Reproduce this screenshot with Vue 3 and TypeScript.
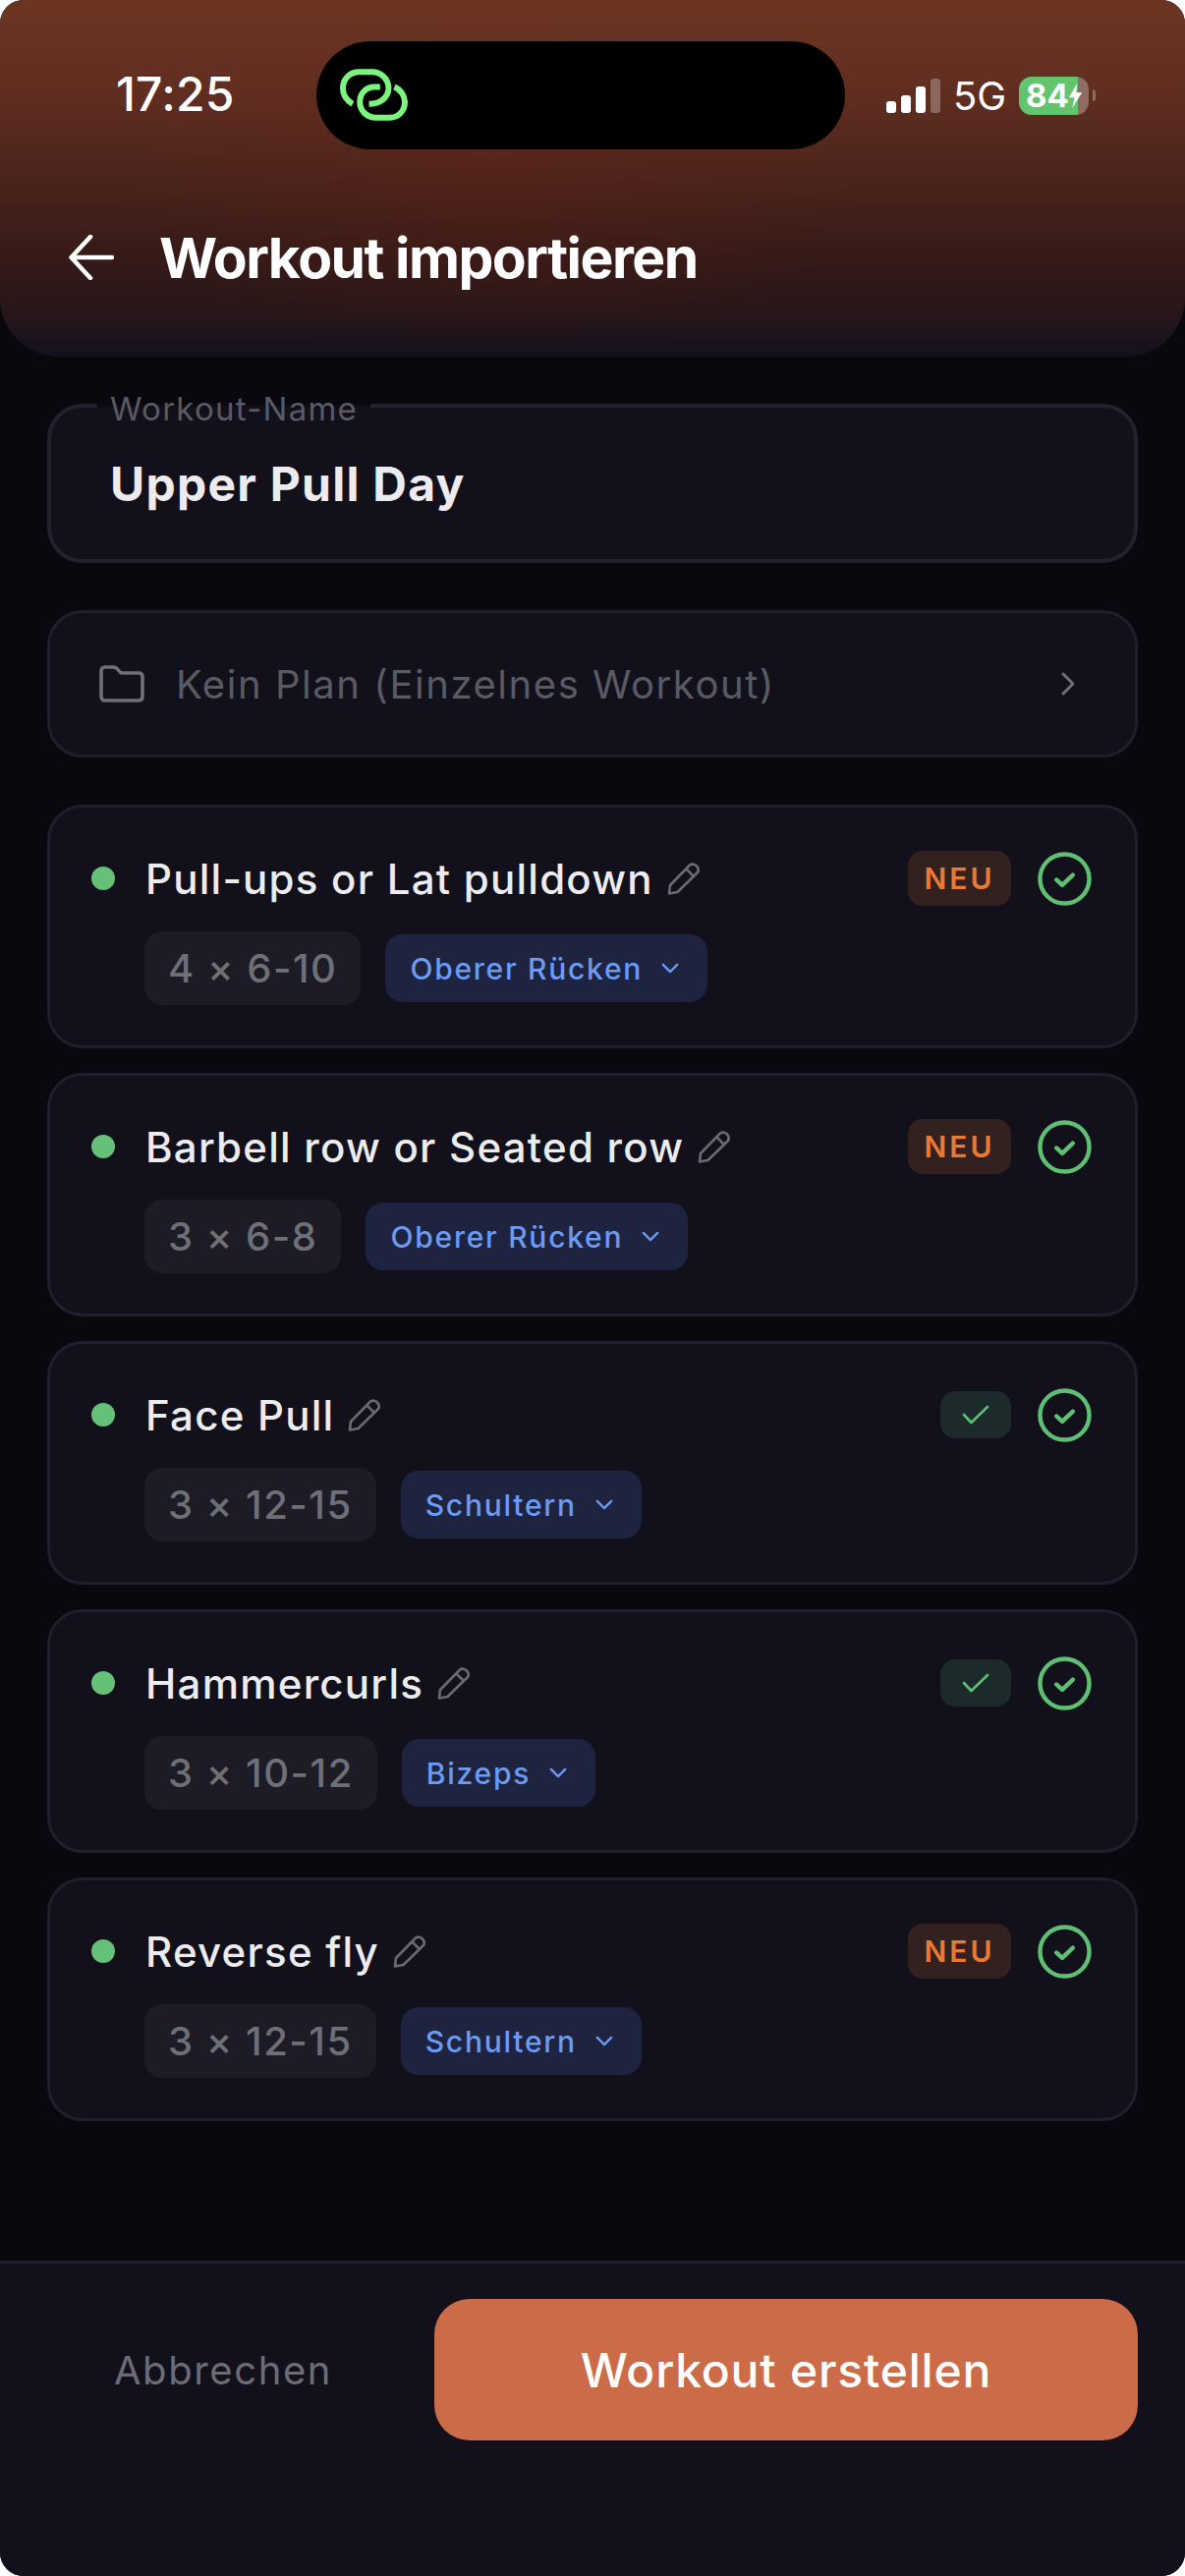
<script setup lang="ts">
interface Exercise {
  name: string
  sets: string
  muscle: string
  isNew: boolean
}
const exercises: Exercise[] = [
  { name: 'Pull-ups or Lat pulldown', sets: '4 × 6-10', muscle: 'Oberer Rücken', isNew: true },
  { name: 'Barbell row or Seated row', sets: '3 × 6-8', muscle: 'Oberer Rücken', isNew: true },
  { name: 'Face Pull', sets: '3 × 12-15', muscle: 'Schultern', isNew: false },
  { name: 'Hammercurls', sets: '3 × 10-12', muscle: 'Bizeps', isNew: false },
  { name: 'Reverse fly', sets: '3 × 12-15', muscle: 'Schultern', isNew: true },
]
</script>

<template>
  <div class="screen">
    <header class="header">
      <div class="status">
        <span class="time">17:25</span>
        <div class="island">
          <svg class="logo" viewBox="130 140 220 170" fill="none" stroke="#7cf57f" stroke-width="18" stroke-linecap="butt">
            <path d="M178 256 C158 245 148 228 148 208 C148 178 170 158 198 158 H238 C266 158 288 180 288 208 C288 236 262 256 228 256" />
            <path d="M262 204 H245 C218 204 200 225 200 250 C200 278 222 298 250 298 H292 C318 298 338 278 338 250 C338 232 326 212 306 204" />
          </svg>
        </div>
        <div class="signal">
          <i class="bar b1"></i><i class="bar b2"></i><i class="bar b3"></i><i class="bar b4"></i>
        </div>
        <span class="net">5G</span>
        <div class="battery">
          <span class="level">84</span>
          <svg class="bolt" viewBox="0 0 18 30"><path d="M11 0 L1 17 H8 L5 30 L17 11 H10 Z" fill="#fff" /></svg>
        </div>
        <i class="tip"></i>
      </div>
      <div class="nav">
        <svg class="back" viewBox="0 0 46 46" fill="none" stroke="#fff" stroke-width="4.5" stroke-linecap="round" stroke-linejoin="round">
          <path d="M44 23 H3 M22 2 L2.5 23 L22 44" />
        </svg>
        <h1 class="title">Workout importieren</h1>
      </div>
    </header>

    <main class="main">
      <div class="field">
        <span class="field-label">Workout-Name</span>
        <span class="field-value">Upper Pull Day</span>
      </div>

      <div class="plan">
        <svg class="folder" viewBox="0 0 46 38" fill="none" stroke="#6f6f78" stroke-width="3.6" stroke-linejoin="round">
          <path d="M2 6 Q2 2 6 2 H14 Q17 2 19 4.5 L21 7 Q22 8 24 8 H40 Q44 8 44 12 V32 Q44 36 40 36 H6 Q2 36 2 32 Z" />
        </svg>
        <span class="plan-text">Kein Plan (Einzelnes Workout)</span>
        <svg class="chev-right" viewBox="0 0 16 26" fill="none" stroke="#6f6f78" stroke-width="3" stroke-linecap="round" stroke-linejoin="round">
          <path d="M3 3 L13 13 L3 23" />
        </svg>
      </div>

      <div class="list">
        <article v-for="ex in exercises" :key="ex.name" class="card">
          <div class="row-top">
            <i class="dot"></i>
            <span class="name">{{ ex.name }}</span>
            <svg class="pencil" viewBox="0 0 34 34" fill="none" stroke="#6a6a72" stroke-width="2.6" stroke-linejoin="round">
              <path d="M3 24 L23 3.5 Q26 1.5 29.5 4 Q33 7.5 31 11 L10.5 31 L2 32.5 Z M19.5 7.5 L27 15" />
            </svg>
            <span v-if="ex.isNew" class="badge-new">NEU</span>
            <span v-else class="badge-ok">
              <svg viewBox="0 0 28 20" fill="none" stroke="#5fbf73" stroke-width="2.6" stroke-linecap="round" stroke-linejoin="round">
                <path d="M2 10 L9.5 18 L26 2" />
              </svg>
            </span>
            <svg class="check" viewBox="0 0 56 56" fill="none" stroke="#5fbf73">
              <circle cx="28" cy="28" r="25.5" stroke-width="4.5" />
              <path d="M19.5 29 L25.5 34.5 L36.5 24" stroke-width="4.5" stroke-linecap="round" stroke-linejoin="round" />
            </svg>
          </div>
          <div class="row-bottom">
            <span class="sets">{{ ex.sets }}</span>
            <span class="muscle">
              {{ ex.muscle }}
              <svg class="chev-down" viewBox="0 0 20 12" fill="none" stroke="#6b9bf5" stroke-width="2.6" stroke-linecap="round" stroke-linejoin="round">
                <path d="M2 2 L10 10 L18 2" />
              </svg>
            </span>
          </div>
        </article>
      </div>
    </main>

    <footer class="footer">
      <button class="cancel" type="button">Abbrechen</button>
      <button class="create" type="button">Workout erstellen</button>
    </footer>
  </div>
</template>

<style>
html, body { margin: 0; background: #fff; }
</style>

<style scoped>
.screen {
  width: 1206px;
  height: 2622px;
  display: flex;
  flex-direction: column;
  background: #08080e;
  border-radius: 24px;
  overflow: hidden;
  font-family: Inter, "Noto Sans", sans-serif;
}
.header {
  height: 363px;
  box-sizing: border-box;
  flex: none;
  border-radius: 0 0 60px 60px;
  background:
    radial-gradient(ellipse 380px 170px at 500px 190px, rgba(115, 30, 20, 0.2), rgba(115, 30, 20, 0) 100%),
    linear-gradient(180deg, #6c3522 0%, #5f2d20 28%, #4a241c 50%, #351a17 72%, #271619 88%, #13111e 100%);
  padding-top: 42px;
}
.status {
  display: flex;
  align-items: center;
  height: 110px;
  padding-left: 118px;
  color: #fff;
}
.time {
  width: 204px;
  font-size: 48px;
  font-weight: 500;
  margin-top: -3px;
  letter-spacing: 0.2px;
}
.island {
  width: 538px;
  height: 110px;
  flex: none;
  background: #000;
  border-radius: 55px;
  display: flex;
  align-items: center;
  padding-left: 21px;
  box-sizing: border-box;
}
.logo { width: 73px; height: 57px; margin-top: -4px; }
.signal {
  margin-left: 42px;
  display: flex;
  align-items: flex-end;
  gap: 5px;
  height: 35px;
}
.bar { width: 10px; background: #fff; border-radius: 3px; display: block; }
.b1 { height: 12px; }
.b2 { height: 18px; }
.b3 { height: 27px; }
.b4 { height: 35px; background: rgba(255, 255, 255, 0.28); }
.net {
  margin-left: 13px;
  width: 67px;
  font-size: 40px;
  font-weight: 400;
}
.battery {
  width: 71px;
  height: 39px;
  border-radius: 13px;
  background: linear-gradient(90deg, #62c46c 0 60px, rgba(255, 255, 255, 0.3) 60px);
  display: flex;
  align-items: center;
  padding-left: 7px;
  box-sizing: border-box;
  font-size: 33px;
  font-weight: 700;
}
.level { letter-spacing: 0; }
.bolt { width: 15px; height: 27px; margin-left: -1px; flex: none; }
.tip {
  display: block;
  width: 3px;
  height: 12px;
  margin-left: 4px;
  background: rgba(255, 255, 255, 0.3);
  border-radius: 0 3px 3px 0;
}
.nav {
  display: flex;
  align-items: center;
  margin-top: 72px;
  height: 76px;
  padding-left: 70px;
}
.back { width: 46px; height: 46px; }
.title {
  margin: 0 0 0 46px;
  color: #fff;
  font-size: 57px;
  font-weight: 700;
  letter-spacing: -1.5px;
  white-space: nowrap;
}
.main {
  flex: 1;
  padding: 48px 48px 0;
}
.field {
  position: relative;
  height: 162px;
  box-sizing: border-box;
  background: #11101b;
  border: 4px solid #22222f;
  border-radius: 36px;
  display: flex;
  align-items: center;
  padding-left: 60px;
}
.field-label {
  position: absolute;
  top: -18px;
  left: 47px;
  padding: 0 13px;
  background: linear-gradient(180deg, #08080e 0 14px, #11101b 18px);
  color: #5b5a64;
  font-size: 33px;
  letter-spacing: 1.25px;
  line-height: 38px;
}
.field-value {
  color: #ececee;
  font-size: 48px;
  font-weight: 700;
  letter-spacing: 1.25px;
}
.plan {
  margin-top: 48px;
  height: 150px;
  box-sizing: border-box;
  background: #11101b;
  border: 3px solid #1f1f2d;
  border-radius: 36px;
  display: flex;
  align-items: center;
  padding: 0 60px 0 50px;
}
.folder { width: 46px; height: 38px; flex: none; }
.plan-text {
  margin-left: 32px;
  flex: 1;
  color: #5a5a63;
  font-size: 40px;
  letter-spacing: 1.55px;
}
.chev-right { width: 16px; height: 26px; }
.list {
  margin-top: 48px;
  display: flex;
  flex-direction: column;
  gap: 25px;
}
.card {
  height: 248px;
  box-sizing: border-box;
  background: #11101b;
  border: 3px solid #1f1f2d;
  border-radius: 36px;
  padding: 45px 44px 0 42px;
}
.row-top {
  display: flex;
  align-items: center;
  height: 54px;
}
.dot {
  display: block;
  width: 24px;
  height: 24px;
  border-radius: 50%;
  background: #66c178;
  flex: none;
}
.name {
  margin-left: 31px;
  color: #ececee;
  font-size: 42px;
  font-weight: 500;
  letter-spacing: 1.25px;
  white-space: nowrap;
}
.pencil { width: 34px; height: 34px; margin-left: 14px; flex: none; }
.badge-new {
  margin-left: auto;
  width: 105px;
  height: 56px;
  border-radius: 15px;
  background: #33211f;
  color: #e87a35;
  font-size: 30px;
  font-weight: 600;
  letter-spacing: 3px;
  display: flex;
  align-items: center;
  justify-content: center;
}
.badge-ok {
  margin-left: auto;
  width: 72px;
  height: 48px;
  border-radius: 15px;
  background: #1d2a2b;
  display: flex;
  align-items: center;
  justify-content: center;
}
.badge-ok svg { width: 28px; height: 20px; }
.check { width: 55px; height: 55px; margin-left: 27px; flex: none; }
.row-bottom {
  display: flex;
  align-items: center;
  margin-top: 27px;
  margin-left: 54px;
  gap: 25px;
}
.sets {
  height: 75px;
  padding: 0 24px;
  border-radius: 18px;
  background: #1c1b26;
  color: #6f6f76;
  font-size: 40px;
  font-weight: 500;
  letter-spacing: 1.5px;
  display: flex;
  align-items: center;
}
.muscle {
  height: 69px;
  padding: 0 29px 0 25px;
  border-radius: 18px;
  background: #1e2440;
  color: #6b9bf5;
  font-size: 30px;
  font-weight: 500;
  letter-spacing: 1.75px;
  display: flex;
  align-items: center;
  gap: 19px;
}
.chev-down { width: 18px; height: 11px; }
.footer {
  flex: none;
  height: 321px;
  box-sizing: border-box;
  background: #11101b;
  border-top: 3px solid #1e1d2b;
  display: flex;
  align-items: flex-start;
  padding: 36px 48px 0;
  gap: 36px;
}
.cancel {
  width: 358px;
  height: 144px;
  background: none;
  border: 0;
  padding: 0;
  color: #6d6c75;
  font-family: inherit;
  font-size: 40px;
  letter-spacing: 1.6px;
}
.create {
  flex: 1;
  height: 144px;
  border: 0;
  border-radius: 36px;
  background: #cc6b48;
  color: #fff;
  font-family: inherit;
  font-size: 48px;
  font-weight: 500;
  letter-spacing: 0.8px;
}
</style>
